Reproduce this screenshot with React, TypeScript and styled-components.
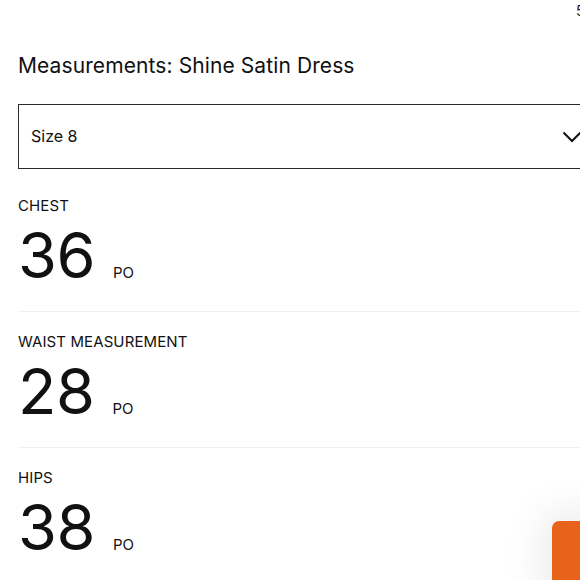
import styled, { createGlobalStyle } from 'styled-components';

const GlobalStyle = createGlobalStyle`
  html, body {
    margin: 0;
    padding: 0;
    background: #ffffff;
    overflow: hidden;
  }
  body {
    font-family: Inter, "Liberation Sans", sans-serif;
    color: #111111;
  }
`;

const measurements = [
  { label: 'CHEST', value: '36', unit: 'PO' },
  { label: 'WAIST MEASUREMENT', value: '28', unit: 'PO' },
  { label: 'HIPS', value: '38', unit: 'PO' },
];

const App = () => {
  return (
    <Page>
      <GlobalStyle />
      <Corner>5</Corner>
      <Panel>
        <Title>Measurements: Shine Satin Dress</Title>
        <Select>
          <span>Size 8</span>
          <svg width="20" height="12" viewBox="0 0 20 12" fill="none">
            <path d="M1.5 1.5 L10 10 L18.5 1.5" stroke="#111" strokeWidth="2" />
          </svg>
        </Select>
        {measurements.map((m, i) => (
          <Row key={m.label} $last={i === measurements.length - 1}>
            <Label>{m.label}</Label>
            <ValueLine>
              <Value>{m.value}</Value>
              <Unit>{m.unit}</Unit>
            </ValueLine>
          </Row>
        ))}
      </Panel>
      <FloatingButton />
    </Page>
  );
};

const Page = styled.div`
  position: relative;
  width: 580px;
  height: 580px;
  overflow: hidden;
`;

const Corner = styled.div`
  position: absolute;
  top: 2px;
  left: 576px;
  font-size: 14px;
  color: #222;
`;

const Panel = styled.div`
  display: flex;
  flex-direction: column;
  width: 585px;
  padding: 52px 0 0 18px;
`;

const Title = styled.h1`
  margin: 0;
  font-size: 21px;
  font-weight: 400;
  line-height: 28px;
  letter-spacing: 0.1px;
`;

const Select = styled.div`
  display: flex;
  align-items: center;
  justify-content: space-between;
  box-sizing: border-box;
  height: 65px;
  margin: 24px 0 7px;
  padding: 0 20px 0 12px;
  border: 1.5px solid #2b2b2b;
  font-size: 16px;

  span {
    margin-top: -2px;
  }
`;

const Row = styled.div<{ $last: boolean }>`
  display: flex;
  flex-direction: column;
  padding: 20px 0 ${(p) => (p.$last ? 0 : 21)}px;
  border-bottom: ${(p) => (p.$last ? 'none' : '1px solid #f0f0f0')};
`;

const Label = styled.div`
  font-size: 15px;
  line-height: 20px;
  letter-spacing: 0.1px;
`;

const ValueLine = styled.div`
  display: flex;
  align-items: baseline;
  gap: 18px;
  margin-top: 4px;
`;

const Value = styled.div`
  font-size: 63px;
  line-height: 70px;
  letter-spacing: -0.5px;
`;

const Unit = styled.div`
  font-size: 15px;
`;

const FloatingButton = styled.div`
  position: absolute;
  left: 552px;
  top: 521px;
  width: 80px;
  height: 80px;
  border-radius: 7px;
  background: #e8621c;
  box-shadow: 0 0 40px 10px rgba(0, 0, 0, 0.08);
`;

export default App;
